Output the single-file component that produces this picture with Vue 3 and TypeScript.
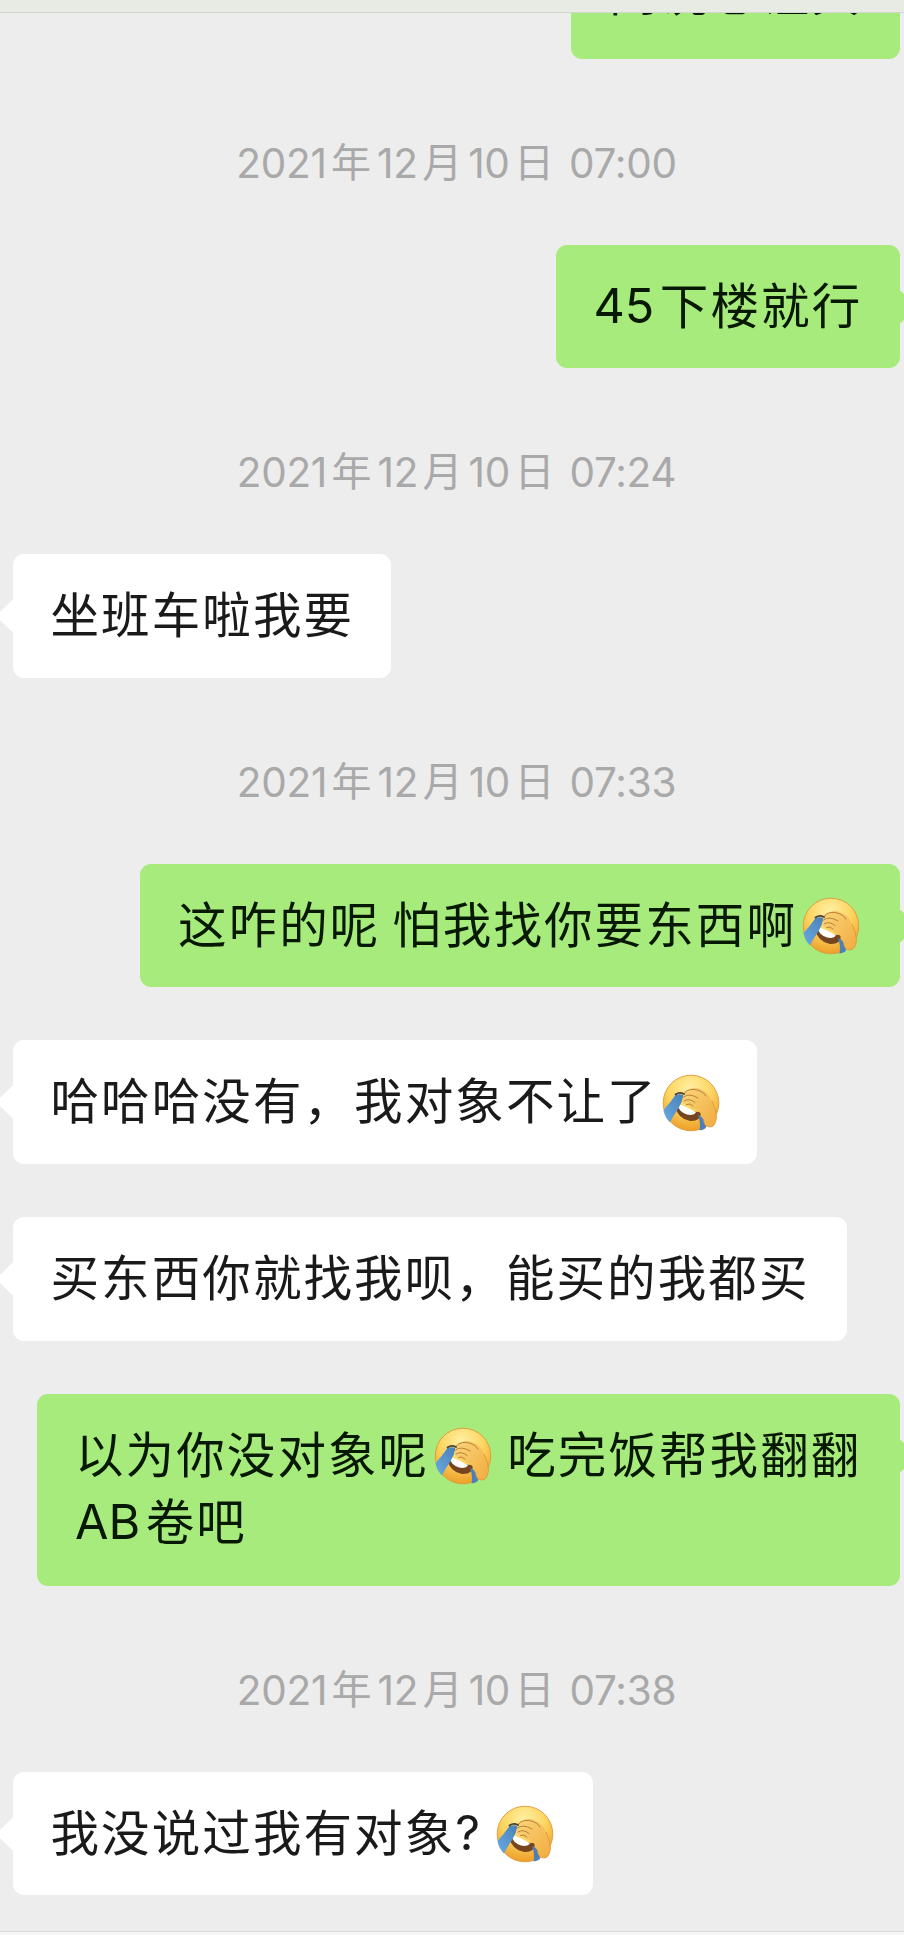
<script setup lang="ts">
type Part = { kind: 'text' | 'latin' | 'mark' | 'emoji' | 'gap'; value?: string }
type Item =
  | { type: 'time'; text: string; time: string }
  | { type: 'msg'; side: 'me' | 'them'; id: string; lines: Part[][] }

const t = (value: string): Part => ({ kind: 'text', value })
const l = (value: string): Part => ({ kind: 'latin', value })
const mark = (value: string): Part => ({ kind: 'mark', value })
const emoji: Part = { kind: 'emoji' }
const gap: Part = { kind: 'gap' }

const items: Item[] = [
  { type: 'msg', side: 'me', id: 'm0', lines: [[t('问说想让其')]] },
  { type: 'time', text: '2021年12月10日', time: '07:00' },
  { type: 'msg', side: 'me', id: 'm1', lines: [[l('45'), t('下楼就行')]] },
  { type: 'time', text: '2021年12月10日', time: '07:24' },
  { type: 'msg', side: 'them', id: 'm2', lines: [[t('坐班车啦我要')]] },
  { type: 'time', text: '2021年12月10日', time: '07:33' },
  { type: 'msg', side: 'me', id: 'm3', lines: [[t('这咋的呢'), gap, t('怕我找你要东西啊'), emoji]] },
  { type: 'msg', side: 'them', id: 'm4', lines: [[t('哈哈哈没有，我对象不让了'), emoji]] },
  { type: 'msg', side: 'them', id: 'm5', lines: [[t('买东西你就找我呗，能买的我都买')]] },
  { type: 'msg', side: 'me', id: 'm6', lines: [[t('以为你没对象呢'), emoji, gap, t('吃完饭帮我翻翻')], [l('AB'), t('卷吧')]] },
  { type: 'time', text: '2021年12月10日', time: '07:38' },
  { type: 'msg', side: 'them', id: 'm7', lines: [[t('我没说过我有对象'), mark('?'), emoji]] },
]

const dateParts = (s: string): string[] => s.match(/\d+|\D/g) ?? []
</script>

<template>
  <main class="chat">
    <svg class="defs" width="0" height="0" aria-hidden="true">
      <defs>
        <radialGradient id="face" cx="48%" cy="24%" r="78%">
          <stop offset="0" stop-color="#fff0a4" />
          <stop offset=".5" stop-color="#fcd561" />
          <stop offset="1" stop-color="#ec9c26" />
        </radialGradient>
        <linearGradient id="hand" x1="0" y1="0" x2="1" y2="1">
          <stop offset="0" stop-color="#f9d57a" />
          <stop offset="1" stop-color="#f2ab3f" />
        </linearGradient>
        <linearGradient id="tear" x1="1" y1="0" x2="0" y2="1">
          <stop offset="0" stop-color="#4a80b8" />
          <stop offset="1" stop-color="#69abe2" />
        </linearGradient>
        <symbol id="facepalm" viewBox="0 0 58 58">
          <circle cx="29" cy="29" r="27.8" fill="url(#face)" stroke="#dc9a38" stroke-width=".9" />
          <path d="M13 32 Q24 38 39 38 Q39 47.500 28 47 Q16 45 13 32Z" fill="#75451f" />
          <path d="M14.500 29.500 Q24 32 34 38.500 Q32 42 25 40.500 Q17 38 14.500 29.500Z" fill="#fff" />
          <path d="M13.500 21 Q17.500 19.500 21.500 21 Q20.500 28 16 35 Q11 42 8 48.500 Q2.500 43 1.500 36 Q8 29 13.500 21Z" fill="url(#tear)" />
          <path d="M36 41 Q43 43 44 54 Q41 56.300 37.500 56.500 Q39 49 36 41Z" fill="#4b7fba" />
          <path d="M21 23 Q20 17 28 15 Q34 12 40 16 Q47 19 50 27 Q54 35 54.500 43 Q53.500 53 48 53 Q42 53 41.500 45 Q40 40 36 36.500 Q29 34 24.500 31 Q20 29 21 26Z" fill="url(#hand)" />
          <path d="M50 27 Q54 35 54.500 43 Q53.500 53 48 53 Q42 53 41.500 45" fill="none" stroke="#d9953a" stroke-width=".8" />
          <path d="M22 19.500 Q27 13 37 16.500 Q42 18 44 22M21.500 23 Q27 18.500 36 24M22 27 Q27 23.500 33 28.500M24.500 30.500 Q28 28.500 31 32" fill="none" stroke="#b98137" stroke-width="1" stroke-linecap="round" />
          <path d="M13.500 20.500 Q17.500 17.500 22 20" fill="none" stroke="#4c4334" stroke-width="1.800" stroke-linecap="round" />
        </symbol>
      </defs>
    </svg>

    <header class="topbar"></header>

    <section class="thread">
      <template v-for="(it, i) in items" :key="i">
        <div v-if="it.type === 'time'" class="stamp">
          <span
            v-for="(p, k) in dateParts(it.text)"
            :key="k"
            :class="/\d/.test(p) ? 'num' : 'han'"
          >{{ p }}</span>
          <span class="num clock">{{ it.time }}</span>
        </div>
        <div v-else class="row" :class="[it.side, it.id]">
          <div class="bubble">
            <div v-for="(line, n) in it.lines" :key="n" class="line">
              <template v-for="(p, k) in line" :key="k">
                <svg v-if="p.kind === 'emoji'" class="emoji" viewBox="0 0 58 58"><use href="#facepalm" /></svg>
                <span v-else-if="p.kind === 'gap'" class="gap"></span>
                <span v-else :class="p.kind">{{ p.value }}</span>
              </template>
            </div>
          </div>
        </div>
      </template>
    </section>

    <footer class="bottombar"></footer>
  </main>
</template>

<style>
html,
body {
  margin: 0;
  background: #ededed;
}
</style>

<style scoped>
.chat {
  width: 904px;
  height: 1935px;
  display: flex;
  flex-direction: column;
  overflow: hidden;
  background: #ededed;
  font-family: 'Noto Sans CJK SC', sans-serif;
}
.defs {
  display: block;
  flex: none;
}
.topbar {
  flex: none;
  height: 12px;
  background: #e8ebe3;
  border-bottom: 1px solid #d3d6cf;
}
.thread {
  flex: 1;
  min-height: 0;
  display: flex;
  flex-direction: column;
  overflow: hidden;
}
.bottombar {
  flex: none;
  height: 3px;
  background: #f6f6f6;
  border-top: 1px solid #d8d8d8;
}
.row {
  flex: none;
  display: flex;
  padding: 0 4.5px 0 12.5px;
  margin-bottom: 53.3px;
}
.row.me {
  justify-content: flex-end;
}
.bubble {
  position: relative;
  box-sizing: border-box;
  height: 123.5px;
  padding: 29px 38px 27px;
  border-radius: 11px;
  background: #fff;
  color: #1a1a1a;
}
.me .bubble {
  background: #a8eb7d;
  color: #071803;
}
.bubble::after {
  content: '';
  position: absolute;
  top: 50px;
  left: -12px;
  width: 24px;
  height: 24px;
  border-radius: 3px;
  background: inherit;
  transform: rotate(45deg);
}
.me .bubble::after {
  left: auto;
  right: -12px;
}
.line {
  position: relative;
  z-index: 1;
  display: flex;
  align-items: center;
  height: 67px;
  font-size: 48.5px;
  line-height: 67px;
  white-space: nowrap;
}
.text {
  letter-spacing: 2.1px;
  margin-top: -8px;
}
.latin,
.mark {
  font-family: Inter, sans-serif;
  font-size: 48.5px;
  margin-top: -3px;
  margin-right: 5.5px;
}
.mark {
  margin-right: 11px;
}
.emoji {
  flex: none;
  width: 58px;
  height: 58px;
  margin: 0 2px 0 4.5px;
}
.gap {
  width: 13.5px;
}
.m0 {
  margin-top: -78px;
  margin-bottom: 0;
}
.m0 .bubble {
  width: 328.5px;
  padding-top: 26px;
}
.m1 .bubble { width: 344px; }
.m2 .bubble { width: 378px; }
.m3 .bubble { width: 759.5px; }
.m4 .bubble { width: 744.5px; }
.m5 .bubble { width: 834.5px; }
.m6 .bubble { width: 862.5px; height: 192px; }
.m7 .bubble { width: 580px; }
.m1, .m2, .m6, .m7 { margin-bottom: 0; }
.stamp {
  flex: none;
  display: flex;
  align-items: center;
  justify-content: center;
  height: 186px;
  padding: 24px 0 0 9px;
  box-sizing: border-box;
  font-size: 40px;
  line-height: 60px;
  color: #a9a9a9;
}
.num {
  font-family: Inter, sans-serif;
  font-size: 40.5px;
  letter-spacing: -0.3px;
}
.han {
  margin: -8px 6px 0 4.5px;
}
.clock {
  margin-left: 9px;
}
</style>
